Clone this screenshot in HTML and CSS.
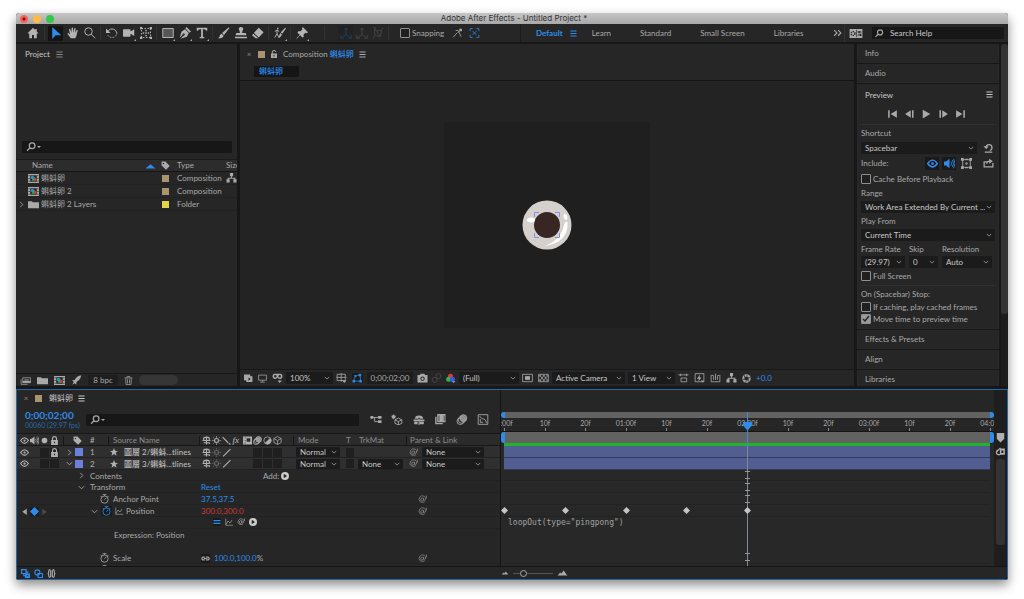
FILE: index.html
```html
<!DOCTYPE html>
<html lang="en">
<head>
<meta charset="utf-8">
<meta name="viewport" content="width=device-width, initial-scale=1">
<title>Adobe After Effects - Untitled Project *</title>
<link rel="stylesheet" href="styles.css">
</head>
<body>
<svg class="defs" aria-hidden="true">
<symbol id="home" viewBox="0 0 16 16"><path d="M8 1 0.5 8.5H3V15h3.7v-4.500h2.600V15H13V8.500h2.500L13 6V2.500h-2V4z"/></symbol>
<symbol id="arrow" viewBox="0 0 16 16"><path d="M3 0v16l4.500-5H15z"/></symbol>
<symbol id="hand" viewBox="0 0 16 16"><path d="M5 15 1 9.500Q0 8 1.500 7.800L4 10 2.700 3Q3.500 1.800 4.500 3l1.300 4.500L6.200 1.200Q7.300 0 8 1.200l.4 6L9.800 1.500q1.200-.8 1.700.4L10.800 8l2-4q1.200-.5 1.500.8L12.500 12 11 15z"/></symbol>
<symbol id="zoom" viewBox="0 0 16 16"><path class="s" d="M1 6a5 5 0 1 0 10 0A5 5 0 1 0 1 6M9.500 9.500 15 15"/></symbol>
<symbol id="find" viewBox="0 0 16 16"><path class="s2" d="M4.500 6a4.500 4.500 0 1 0 9 0a4.500 4.500 0 1 0-9 0M5.500 9 1 14"/></symbol>
<symbol id="rotate" viewBox="0 0 16 16"><path class="s" d="M3 5a6.500 6.500 0 0 1 11.500 3"/><path class="s" stroke-dasharray="2 1.500" d="M14.500 8A6.500 6.500 0 0 1 2 10"/><path d="M0 2v6h6z"/></symbol>
<symbol id="camera" viewBox="0 0 16 16"><path d="M0 4q0-1 1-1h8q1 0 1 1v2l5-3v9l-5-3v3q0 1-1 1H1q-1 0-1-1z"/></symbol>
<symbol id="pan" viewBox="0 0 16 16"><path class="s" stroke-dasharray="2 2" d="M2 2h12v12H2z"/><path d="M8 3l1.500 2.500h-3zM8 13l1.500-2.500h-3zM3 8l2.500-1.500v3zM13 8l-2.500-1.500v3zM7 7h2v2H7zM0 0h3v3H0zM13 0h3v3h-3zM0 13h3v3H0zM13 13h3v3h-3z"/></symbol>
<symbol id="rect" viewBox="0 0 16 16"><path class="s" d="M1 2h14v12H1z"/><path fill-opacity=".35" d="M1 2h14v12H1z"/></symbol>
<symbol id="pen" viewBox="0 0 16 16"><path d="M10 0l6 6-2 1.500L8.500 2zM8 3l5 5-2.500 5L2 15.500l4-4a1.500 1.500 0 1 0-1.200-1.200l-4 4L3.500 6z"/></symbol>
<symbol id="type" viewBox="0 0 16 16"><path d="M1 1h14v4h-1.500Q13 3 11 3H9.200v9.500q0 1 2 1.200V15H4.800v-1.300q2-.2 2-1.200V3H5Q3 3 2.500 5H1z"/></symbol>
<symbol id="brush" viewBox="0 0 16 16"><path d="M15.500 1 8 10.500 5.500 8 14 .5zM5 9l2.500 2.500Q6 15.500 0 15q3-2 2.500-4Q3.500 9 5 9z"/></symbol>
<symbol id="stamp" viewBox="0 0 16 16"><path d="M8 0q3 0 3 2.500Q9.500 5 9.500 8H14q1 0 1 3H1q0-3 1-3h4.500q0-3-1.500-5.500Q5 0 8 0zM0 13h16v2H0z"/></symbol>
<symbol id="eraser" viewBox="0 0 16 16"><path d="M9 1 15.500 7 9 14 2.500 8zM1.800 9l6.500 6H5L0 11z"/></symbol>
<symbol id="roto" viewBox="0 0 16 16"><path d="M16 2l-5 7-2-2 6-6zM8.500 8l2 2Q9 15 5 14q2-1 2-3zM4 1h2v2H4z"/><path class="s" d="M1 6l3-2 3 2M4 4v5l-3 5M4 9l2 4"/></symbol>
<symbol id="pin" viewBox="0 0 16 16"><path d="M9 0l7 7-2 1.200-1.500-.5L10 10.200l.3 3L8.500 14 5.500 11 1 15.500.500 15 5 10.500 2 7.500 3 5.500h3L8.500 3 8 1.500z"/></symbol>
<symbol id="axis" viewBox="0 0 16 16"><path class="s" d="M8 2v8L2 14M8 10l6 4M6 4l2-3 2 3M1 11v4h4M15 11v4h-4"/></symbol>
<symbol id="axis2" viewBox="0 0 16 16"><path class="s" d="M3 3l3 2h7l-2 8-7-2zM1 1h4v4M6 5l5 8M15 1l-4 4M1 15l3-4"/></symbol>
<symbol id="snap" viewBox="0 0 16 16"><path class="s" d="M1 15l6-7M5 4h4l5 10M8 8l5-5"/><path d="M11 1h4v4h-4z"/></symbol>
<symbol id="snap2" viewBox="0 0 16 16"><path class="s" d="M1 5V1h4M11 1h4v4M15 11v4h-4M5 15H1v-4M5 5l6 6M11 5l-6 6"/></symbol>
<symbol id="menu" viewBox="0 0 16 16"><path d="M1 1h14v2.500H1zM1 6.800h14v2.500H1zM1 12.500h14V15H1z"/></symbol>
<symbol id="more" viewBox="0 0 16 16"><path class="s2" d="M2 2l5 5-5 5M9 2l5 5-5 5"/></symbol>
<symbol id="kit" viewBox="0 0 20 14"><path fill-rule="evenodd" d="M0 0h20v14H0zM10 1v12h1V1zM12.500 4v1.500h6V4zM12.500 8.500V10h6V8.500z"/><circle cx="5.500" cy="7" r="3" fill="none" stroke="#262626" stroke-width="2" stroke-dasharray="2 1"/><path fill="#262626" d="M14 3h2v3.500h-2zM16 7.500h2V11h-2z"/></symbol>
<symbol id="tri" viewBox="0 0 16 16"><path d="M0 12 8 5l8 7z"/></symbol>
<symbol id="tag" viewBox="0 0 16 16"><path fill-rule="evenodd" d="M1 1h7l7.500 8-6.500 6.500L1 8zM3 4.500a1.300 1.300 0 1 0 2.600 0 1.300 1.300 0 1 0-2.600 0"/></symbol>
<symbol id="comp" viewBox="0 0 20 16"><path fill-rule="evenodd" d="M0 0h20v16H0zM1 2v2h2V2zM1 7v2h2V7zM1 12v2h2v-2zM17 2v2h2V2zM17 7v2h2V7zM17 12v2h2v-2z"/><path fill="#2b2b2b" d="M4 2h12v12H4z"/><circle cx="8" cy="6" r="3" fill="#2997d8"/><path fill="#35a853" d="M8 9l4-4 1 7H7z"/><path fill="#d6413a" d="M11 7h4v5h-4z"/></symbol>
<symbol id="folder" viewBox="0 0 20 16"><path d="M0 2h7l2 2h11v11H0z"/></symbol>
<symbol id="tree" viewBox="0 0 16 16"><path d="M5.500 0h5v5h-5zM0 10h5v5H0zM11 10h5v5h-5zM7.300 5h1.400v2.500h5.500V10h-1.500V9H3.300v1H1.800V7.500h5.500z"/></symbol>
<symbol id="down" viewBox="0 0 16 16"><path class="s2" d="M2 5l6 6 6-6"/></symbol>
<symbol id="right" viewBox="0 0 16 16"><path class="s2" d="M5 2l6 6-6 6"/></symbol>
<symbol id="stack" viewBox="0 0 20 16"><path class="s" d="M5 12V3h14v9zM2 6v9h12"/><path d="M8 6h8v2H8zM5 9h14v3H5z"/></symbol>
<symbol id="rocket" viewBox="0 0 16 16"><path d="M15.500.5Q15 7 8 11l-.5 4-3-2L1 15.500 3.500 11 1 8.500 5 8Q9 1 15.500.5z"/></symbol>
<symbol id="trash" viewBox="0 0 16 16"><path class="s" d="M1 3.500h14M5.500 3V1h5v2M3 4l.5 11h9L13 4M6.200 6v7M9.800 6v7"/></symbol>
<symbol id="unlock" viewBox="0 0 16 16"><path class="s2" d="M4.500 8V4a3.500 3 0 0 1 7 0"/><path fill-rule="evenodd" d="M2 7h12v9H2zM7 10v3h2v-3z"/></symbol>
<symbol id="lock" viewBox="0 0 16 16"><path class="s2" d="M4.500 8V4a3.500 3 0 0 1 7 0v4"/><path fill-rule="evenodd" d="M2 7h12v9H2zM7 10v3h2v-3z"/></symbol>
<symbol id="multi" viewBox="0 0 16 16"><path fill-rule="evenodd" d="M0 1h11v3h4v10H4v-3H0zM8 6v6l4-3z"/></symbol>
<symbol id="monitor" viewBox="0 0 16 16"><path class="s" d="M1 2h14v9H1zM8 11v3M4 14.500h8"/></symbol>
<symbol id="mask" viewBox="0 0 16 16"><path fill-rule="evenodd" d="M3 1h10q3 0 3 4t-3.500 4.500Q9.500 9.500 8 7 6.500 9.500 3.500 9.500 0 9 0 5t3-4zM2.500 5q0 2 2 2t2-2-2-2-2 2zM9.500 5q0 2 2 2t2-2-2-2-2 2zM8 12h7l-3.500 4z"/></symbol>
<symbol id="grid" viewBox="0 0 16 16"><path class="s" d="M1 2h13v10H1zM7.500 0v14M0 7h16"/><path d="M9 12h7l-3.500 4z"/></symbol>
<symbol id="path" viewBox="0 0 16 16"><path class="s" d="M2 13Q2 4 12 3l1 10z"/><path d="M0 11h4v4H0zM10 1h4v4h-4zM11 11h4v4h-4zM3 3h3v3H3z"/></symbol>
<symbol id="photo" viewBox="0 0 16 16"><path fill-rule="evenodd" d="M0 3h4l1-2h6l1 2h4v12H0zM4.500 9q0 3.500 3.500 3.500T11.500 9 8 5.500 4.500 9zM6 9q0-2 2-2t2 2-2 2-2-2z"/></symbol>
<symbol id="ghost" viewBox="0 0 16 16"><circle class="s" cx="11" cy="5" r="4"/><circle class="s" cx="5" cy="11" r="4"/></symbol>
<symbol id="rgb" viewBox="0 0 16 16"><circle cx="8" cy="5" r="4" fill="#ed342d"/><circle cx="5" cy="10" r="4" fill="#31b44a"/><circle cx="11" cy="10" r="4" fill="#315df0"/><path d="M10 13h6l-3 3z"/></symbol>
<symbol id="roi" viewBox="0 0 18 16"><path class="s" d="M1 2h16v12H1z"/><path d="M5 5h8v6H5z"/></symbol>
<symbol id="checker" viewBox="0 0 18 16"><path class="s" d="M1 2h16v12H1z"/><path fill-opacity=".8" d="M2 3h3v3H2zM8 3h3v3H8zM5 6h3v4H5zM11 6h3v4h-3zM2 10h3v3H2zM8 10h3v3H8zM14 10h2v3h-2zM14 3h2v3h-2z"/></symbol>
<symbol id="aspect" viewBox="0 0 16 16"><path class="s" d="M0 3h16M3 1v4M13 1v4M4 8h9v6H4z"/></symbol>
<symbol id="fast" viewBox="0 0 16 16"><path class="s" d="M1 1h14v13H1z"/><path d="M9 2 4 9h3l-1 5 5-7H8zM10 12h5l-2 3z"/></symbol>
<symbol id="flow" viewBox="0 0 16 16"><path class="s" d="M1 3v11h14V3M5 5v6M8 1v10M11 5v6M2 4h3M11 4h3"/></symbol>
<symbol id="shutter" viewBox="0 0 16 16"><circle cx="8" cy="8" r="7.500"/><path stroke="#262626" stroke-width="1.300" fill="#262626" d="M6.500 5.500h3L11 8l-1.500 2.500h-3L5 8zM6.500 5.500 10 1M9.500 5.500 15 7M11 8l1 6M9.500 10.500 6 15M6.500 10.500 1 9M5 8 4 2"/></symbol>
<symbol id="first" viewBox="0 0 16 16"><path d="M1 2h2.500v12H1zM15 2v12L5 8z"/></symbol>
<symbol id="prev" viewBox="0 0 16 16"><path d="M10 2v12L1 8zM12 2h2.500v12H12z"/></symbol>
<symbol id="play" viewBox="0 0 16 16"><path d="M2 1v14l12-7z"/></symbol>
<symbol id="reset" viewBox="0 0 16 16"><path class="s2" d="M4 7a4.800 4.800 0 1 1 6 5M2 14.500h12"/><path d="M0 5h8l-3.500 5z"/></symbol>
<symbol id="share" viewBox="0 0 16 16"><path class="s2" d="M5 6H1v8h14V8M5 9q0-4 5-4"/><path d="M9 1l6 4-6 4z"/></symbol>
<symbol id="eye" viewBox="0 0 16 16"><path class="s2" d="M1 8q3.500-5 7-5t7 5q-3.500 5-7 5T1 8z"/><circle cx="8" cy="8" r="2"/></symbol>
<symbol id="speaker" viewBox="0 0 16 16"><path d="M0 5h3l5-4v14l-5-4H0z"/><path class="s" d="M10 5q2 3 0 6M12 3q4 5 0 10M14 1q4 7 0 14"/></symbol>
<symbol id="dot" viewBox="0 0 16 16"><circle cx="8" cy="8" r="5"/></symbol>
<symbol id="box" viewBox="0 0 16 16"><path class="s" d="M2.500 2.500h11v11h-11zM7 7h2v2H7z"/><path d="M0 0h4v4H0zM12 0h4v4h-4zM0 12h4v4H0zM12 12h4v4h-4zM6 1h4v2H6zM6 13h4v2H6z"/></symbol>
<symbol id="shy" viewBox="0 0 16 16"><path class="s2" d="M3 8V5q0-3 5-3t5 3v3M1 8h14M8 3v12M3 12h10v2"/></symbol>
<symbol id="sun" viewBox="0 0 16 16"><circle class="s2" cx="8" cy="8" r="3.500"/><path class="s" d="M8 0v3M8 13v3M0 8h3M13 8h3M2.500 2.500 4 4M12 12l1.500 1.500M2.500 13.500 4 12M12 4l1.500-1.500"/></symbol>
<symbol id="back" viewBox="0 0 16 16"><path class="s2" d="M1 2l10 10M12 13l3 2"/></symbol>
<symbol id="slash" viewBox="0 0 16 16"><path class="s2" d="M2 15 15 2"/></symbol>
<symbol id="film" viewBox="0 0 16 16"><path fill-rule="evenodd" d="M0 1h16v14H0zM3 2.500v2h1.500v-2zM3 7v2h1.500V7zM3 11.500v2h1.500v-2zM6.500 4v6H13V4z"/></symbol>
<symbol id="blur" viewBox="0 0 16 16"><circle fill-opacity=".7" cx="10" cy="6" r="5"/><circle class="s" cx="10" cy="6" r="5"/><circle class="s" cx="7.500" cy="8.500" r="5"/><circle class="s" cx="5.500" cy="10.500" r="4.800"/></symbol>
<symbol id="half" viewBox="0 0 16 16"><circle class="s" cx="8" cy="8" r="6.500"/><path d="M12.600 3.400A6.500 6.500 0 0 1 3.400 12.600z"/></symbol>
<symbol id="cube" viewBox="0 0 16 16"><path class="s" d="M8 1l6.500 3.500v7L8 15l-6.500-3.500v-7zM1.500 4.500 8 8l6.500-3.500M8 8v7"/></symbol>
<symbol id="star" viewBox="0 0 16 16"><path d="M8 0l2.200 5.600 5.800.3-4.600 3.700L13 15.500 8 12l-5 3.500 1.600-5.900L0 5.900l5.800-.3z"/></symbol>
<symbol id="whip" viewBox="0 0 16 16"><path class="s" d="M10 6q-4-2-5 1-1 4 2 4 3 0 3-5v3q1 3 3 0 2-5-2-7-5-2-8 2-3 5 1 8 4 3 8 0M15 1v5"/></symbol>
<symbol id="watch" viewBox="0 0 16 16"><circle class="s" cx="8" cy="9" r="5.800"/><path class="s" d="M8 9l3-3M5 1h6M8 1v2M12.500 3l2 2M2 3l1.500 2"/></symbol>
<symbol id="graph" viewBox="0 0 16 16"><path class="s" d="M1.500 1v13.500H16M2 13l4-7 4 4 4-6"/></symbol>
<symbol id="equal" viewBox="0 0 16 16"><path d="M1 4h14v2.500H1zM1 9.500h14V12H1z"/></symbol>
<symbol id="goto" viewBox="0 0 16 16"><path fill-rule="evenodd" d="M0 8a8 8 0 1 0 16 0A8 8 0 1 0 0 8M5.500 3.500v9L12 8z"/></symbol>
<symbol id="link" viewBox="0 0 16 16"><path class="s2" d="M7 10.500H4a2.500 2.500 0 0 1 0-5h3M9 5.500h3a2.500 2.500 0 0 1 0 5H9M5 8h6"/></symbol>
<symbol id="diamond" viewBox="0 0 16 16"><path d="M8 0l8 8-8 8-8-8z"/></symbol>
<symbol id="left" viewBox="0 0 16 16"><path d="M12 3v11L4 8.500z"/></symbol>
<symbol id="mini" viewBox="0 0 16 16"><path class="s" d="M0 5h12M6 5v6h7"/><path d="M0 3h4v4H0zM11 3h5v4h-5zM11 9h5v4h-5z"/></symbol>
<symbol id="draft" viewBox="0 0 16 16"><path class="s" d="M10 6l5 2.500v5L10 16l-5-2.500v-5zM5 8.500 10 11l5-2.500M10 11v5"/><path d="M3 0v6M0 1l2 1 1-2 1 2 2-1-1 2 2 1-2 1 1 2-2-1-1 2-1-2-2 1 1-2-2-1 2-1z"/></symbol>
<symbol id="shyfill" viewBox="0 0 16 16"><path d="M2 7q0-5 6-5t6 5h-4.500L8 5 6.500 7zM0 8h16v2H0zM1 11h5v4H1zM9 11h6v4H9zM7.300 7h1.400v9H7.300z"/></symbol>
<symbol id="frames" viewBox="0 0 16 16"><path fill-rule="evenodd" d="M4 0h12v12H4zM6 2v8h1V2zM13.500 2v8h1V2zM1 4h2v9h9v2H1z"/></symbol>
<symbol id="curve" viewBox="0 0 16 16"><path class="s" d="M1 1h14v14H1zM3 3l4 4q5 0 6 6M4 7v5h4"/></symbol>
<symbol id="swap" viewBox="0 0 16 16"><path class="s2" d="M1 1h8v7H1zM5 8v4h3M9 5h3v3"/><path fill-rule="evenodd" d="M7 8h9v8H7zM10 11v2h3v-2z"/></symbol>
<symbol id="swap2" viewBox="0 0 16 16"><circle class="s2" cx="6" cy="6" r="4.500"/><path class="s2" d="M7 8h8v7H7z"/></symbol>
<symbol id="brace" viewBox="0 0 16 16"><path class="s2" d="M6 1Q3 1 3 4v2q0 2-2 2 2 0 2 2v2q0 3 3 3M10 1q3 0 3 3v2q0 2 2 2-2 0-2 2v2q0 3-3 3M6.500 2v12M9.500 2v12"/></symbol>
<symbol id="marker" viewBox="0 0 16 16"><path d="M2 0h12v9l-6 6-6-6z"/></symbol>
<symbol id="cut" viewBox="0 0 16 16"><path class="s2" d="M8 3 1 10M5 6a4 4 0 1 0 3 7"/><path fill-rule="evenodd" d="M7 4h8v10H7zM9.500 7v4h3V7z"/></symbol>
<symbol id="hill" viewBox="0 0 16 10"><path d="M0 9 4 4l2 2 4-5 6 8z"/></symbol>
<symbol id="head" viewBox="0 0 16 16"><path d="M0 1h16v6l-8 9-8-9z"/></symbol>
</svg>

<div class="window">
<header class="titlebar">
  <div class="lights"><button class="light red" aria-label="Close"></button><button class="light amber" aria-label="Minimize"></button><button class="light green" aria-label="Zoom"></button></div>
  <h1>Adobe After Effects - Untitled Project *</h1>
</header>

<div class="toolbar">
  <div class="tools">
    <div class="group first"><button class="tool" aria-label="Home"><svg><use href="#home"/></svg></button></div>
    <div class="group"><button class="tool on" aria-label="Selection"><svg><use href="#arrow"/></svg></button><button class="tool" aria-label="Hand"><svg><use href="#hand"/></svg></button><button class="tool" aria-label="Zoom"><svg><use href="#zoom"/></svg></button></div>
    <div class="group"><button class="tool" aria-label="Rotate"><svg><use href="#rotate"/></svg></button><button class="tool more" aria-label="Camera"><svg><use href="#camera"/></svg></button><button class="tool" aria-label="Pan behind"><svg><use href="#pan"/></svg></button></div>
    <div class="group"><button class="tool more" aria-label="Rectangle"><svg><use href="#rect"/></svg></button><button class="tool more" aria-label="Pen"><svg><use href="#pen"/></svg></button><button class="tool more" aria-label="Type"><svg><use href="#type"/></svg></button></div>
    <div class="group"><button class="tool" aria-label="Brush"><svg><use href="#brush"/></svg></button><button class="tool" aria-label="Clone stamp"><svg><use href="#stamp"/></svg></button><button class="tool" aria-label="Eraser"><svg><use href="#eraser"/></svg></button></div>
    <div class="group"><button class="tool more" aria-label="Roto brush"><svg><use href="#roto"/></svg></button></div>
    <div class="group"><button class="tool more" aria-label="Puppet pin"><svg><use href="#pin"/></svg></button></div>
    <div class="group axes"><button class="tool blue" aria-label="Local axis"><svg><use href="#axis"/></svg></button><button class="tool" aria-label="World axis"><svg><use href="#axis"/></svg></button><button class="tool" aria-label="View axis"><svg><use href="#axis2"/></svg></button></div>
    <div class="group snapping"><label><input type="checkbox">Snapping</label><svg class="i10"><use href="#snap"/></svg><svg class="i10 blue"><use href="#snap2"/></svg></div>
  </div>
  <nav class="spaces"><a href="#" class="current">Default</a><svg class="i7 blue"><use href="#menu"/></svg><a href="#" class="learn">Learn</a><a href="#">Standard</a><a href="#">Small Screen</a><a href="#">Libraries</a><svg class="i9 end"><use href="#more"/></svg></nav>
  <div class="help"><svg class="kit"><use href="#kit"/></svg><label class="field"><svg class="i9"><use href="#find"/></svg><input type="text" placeholder="Search Help" aria-label="Search Help"></label></div>
</div>

<main class="main">
  <section class="panel project">
    <h2 class="head">Project <svg class="i7"><use href="#menu"/></svg></h2>
    <label class="field psearch"><svg class="i10"><use href="#find"/></svg><span class="caret"></span><input type="text" aria-label="Search project"></label>
    <table class="assets">
      <thead><tr><th class="c-name">Name</th><th class="c-sort"><svg class="i10 blue"><use href="#tri"/></svg></th><th class="c-tag"><svg class="i9"><use href="#tag"/></svg></th><th class="c-type">Type</th><th class="c-size">Size</th></tr></thead>
      <tbody>
        <tr><td colspan="2"><div class="name"><svg class="thumb"><use href="#comp"/></svg>蝌蚪卵</div></td><td class="c-tag"><i class="sw tan"></i></td><td>Composition</td><td><svg class="i10"><use href="#tree"/></svg></td></tr>
        <tr><td colspan="2"><div class="name"><svg class="thumb"><use href="#comp"/></svg>蝌蚪卵 2</div></td><td class="c-tag"><i class="sw tan"></i></td><td>Composition</td><td></td></tr>
        <tr><td colspan="2"><div class="name folder"><svg class="i7"><use href="#right"/></svg><svg class="thumb"><use href="#folder"/></svg>蝌蚪卵 2 Layers</div></td><td class="c-tag"><i class="sw yellow"></i></td><td>Folder</td><td></td></tr>
      </tbody>
    </table>
    <footer class="pfoot"><svg class="thumb"><use href="#stack"/></svg><svg class="thumb"><use href="#folder"/></svg><svg class="thumb"><use href="#comp"/></svg><svg class="i10"><use href="#rocket"/></svg><button class="bpc">8 bpc</button><svg class="i9"><use href="#trash"/></svg><span class="hscroll"></span></footer>
  </section>

  <section class="panel viewer">
    <div class="head"><span class="x">×</span><i class="sw tan"></i><svg class="i8"><use href="#unlock"/></svg><h2>Composition <b>蝌蚪卵</b></h2><svg class="i7"><use href="#menu"/></svg></div>
    <div class="crumbs"><a href="#">蝌蚪卵</a></div>
    <div class="stage"><div class="canvas">
      <svg class="egg" viewBox="0 0 50 50"><circle cx="25" cy="25" r="24.500" fill="#d5d0cc"/><circle cx="25" cy="25" r="13" fill="#372624"/><ellipse cx="9" cy="20" rx="4" ry="2.500" fill="#fff"/><ellipse cx="43.500" cy="17" rx="1.800" ry="3" fill="#fff" transform="rotate(-12 43.500 17)"/><path d="M45.500 22Q47 42 23 46 39 40 42 25 43 21 45.500 22z" fill="#fff"/><path d="M12.500 17v-4.500H17M33 12.500h4.500V17M37.500 33v4.500H33M17 37.500h-4.500V33" fill="none" stroke="#7e93e8"/></svg>
    </div></div>
    <footer class="vfoot">
      <svg class="i9"><use href="#multi"/></svg><svg class="i9"><use href="#monitor"/></svg><svg class="i10"><use href="#mask"/></svg>
      <select aria-label="Magnification" class="w44"><option>100%</option></select>
      <svg class="i10"><use href="#grid"/></svg><svg class="i10 blue lit"><use href="#path"/></svg>
      <button class="code">0;00;02;00</button>
      <svg class="i10"><use href="#photo"/></svg><svg class="i10 faint near"><use href="#ghost"/></svg><svg class="i10 near"><use href="#rgb"/></svg>
      <select aria-label="Resolution" class="w58"><option>(Full)</option></select>
      <svg class="i10"><use href="#roi"/></svg><svg class="i10"><use href="#checker"/></svg>
      <select aria-label="Camera" class="w74"><option>Active Camera</option></select><select aria-label="View layout" class="w48"><option>1 View</option></select>
      <svg class="i10"><use href="#aspect"/></svg><svg class="i10"><use href="#fast"/></svg><svg class="i10"><use href="#flow"/></svg><svg class="i10"><use href="#tree"/></svg>
      <svg class="i9"><use href="#shutter"/></svg><a href="#" class="exposure">+0.0</a>
    </footer>
  </section>

  <aside class="side">
    <div class="stacked">
      <h3>Info</h3><h3>Audio</h3>
      <section class="preview">
        <h3>Preview <svg class="i7"><use href="#menu"/></svg></h3>
        <div class="transport"><button aria-label="First frame"><svg><use href="#first"/></svg></button><button aria-label="Previous frame"><svg><use href="#prev"/></svg></button><button aria-label="Play"><svg><use href="#play"/></svg></button><button class="flip" aria-label="Next frame"><svg><use href="#prev"/></svg></button><button class="flip" aria-label="Last frame"><svg><use href="#first"/></svg></button></div>
        <label for="shortcut" class="lab">Shortcut</label>
        <div class="line"><select id="shortcut" class="grow"><option>Spacebar</option></select><svg class="i10 tailico"><use href="#reset"/></svg></div>
        <div class="line include"><span>Include:</span><button class="inc on" aria-label="Video"><svg><use href="#eye"/></svg></button><button class="inc on" aria-label="Audio"><svg><use href="#speaker"/></svg></button><button class="inc" aria-label="Overlays"><svg><use href="#box"/></svg></button><svg class="i10 tailico"><use href="#share"/></svg></div>
        <label class="check cache"><input type="checkbox">Cache Before Playback</label>
        <label for="range" class="lab">Range</label>
        <select id="range" class="full"><option>Work Area Extended By Current ...</option></select>
        <label for="from" class="lab">Play From</label>
        <select id="from" class="full"><option>Current Time</option></select>
        <div class="trio"><label>Frame Rate<select><option>(29.97)</option></select></label><label>Skip<select><option>0</option></select></label><label>Resolution<select><option>Auto</option></select></label></div>
        <label class="check"><input type="checkbox">Full Screen</label>
        <div class="stop"><span>On (Spacebar) Stop:</span><label class="check"><input type="checkbox">If caching, play cached frames</label><label class="check"><input type="checkbox" checked>Move time to preview time</label></div>
      </section>
      <h3>Effects &amp; Presets</h3><h3>Align</h3><h3 class="cutoff">Libraries</h3>
    </div>
    <div class="vscroll"><span></span></div>
  </aside>
</main>

<section class="timeline">
  <div class="layers">
    <div class="thead"><span class="x">×</span><i class="sw tan"></i><h2>蝌蚪卵</h2><svg class="i7"><use href="#menu"/></svg></div>
    <div class="tbar"><div class="time"><strong>0;00;02;00</strong><span>00060 (29.97 fps)</span></div>
      <label class="field"><svg class="i10"><use href="#find"/></svg><span class="caret"></span><input type="text" aria-label="Search layers"></label>
      <div class="tbtns"><svg><use href="#mini"/></svg><svg><use href="#draft"/></svg><svg><use href="#shyfill"/></svg><svg><use href="#frames"/></svg><svg><use href="#blur"/></svg><svg><use href="#curve"/></svg></div></div>
    <div class="row cols">
      <div class="av"><svg><use href="#eye"/></svg><svg><use href="#speaker"/></svg><svg><use href="#dot"/></svg><svg><use href="#lock"/></svg></div>
      <div class="lbl bar"><svg class="i9 htag"><use href="#tag"/></svg></div><div class="num">#</div><div class="bar pad">Source Name</div>
      <div class="switches bar"><svg><use href="#shy"/></svg><svg><use href="#sun"/></svg><svg><use href="#back"/></svg><em>fx</em><svg><use href="#film"/></svg><svg><use href="#blur"/></svg><svg><use href="#half"/></svg><svg><use href="#cube"/></svg></div>
      <div class="bar pad">Mode</div><div class="tcell">T</div><div class="pad">TrkMat</div><div class="bar pad last">Parent &amp; Link</div>
    </div>
    <div class="rows">
      <div class="row layer">
        <div class="av"><svg><use href="#eye"/></svg><i></i><i class="hole"></i><svg class="hole"><use href="#lock"/></svg></div>
        <div class="lbl"><svg class="i7"><use href="#right"/></svg><i class="sw blu"></i></div><div class="num">1</div><div class="src"><svg class="i8"><use href="#star"/></svg>圖層 2/蝌蚪...tlines</div>
        <div class="switches"><svg><use href="#shy"/></svg><svg class="dim"><use href="#sun"/></svg><svg><use href="#slash"/></svg><span></span><span></span><i class="hole"></i><i class="hole"></i><i class="hole"></i></div>
        <div class="cell"><select aria-label="Mode"><option>Normal</option></select></div><div class="tcell"><i class="hole"></i></div><div></div>
        <div class="parent"><svg class="i9"><use href="#whip"/></svg><select aria-label="Parent"><option>None</option></select></div>
      </div>
      <div class="row layer">
        <div class="av"><svg><use href="#eye"/></svg><i></i><i class="hole"></i><i class="hole"></i></div>
        <div class="lbl"><svg class="i7"><use href="#down"/></svg><i class="sw blu"></i></div><div class="num">2</div><div class="src"><svg class="i8"><use href="#star"/></svg>圖層 3/蝌蚪...tlines</div>
        <div class="switches"><svg><use href="#shy"/></svg><svg class="dim"><use href="#sun"/></svg><svg><use href="#slash"/></svg><span></span><span></span><i class="hole"></i><i class="hole"></i><i class="hole"></i></div>
        <div class="cell"><select aria-label="Mode"><option>Normal</option></select></div><div class="tcell"><i class="hole"></i></div><div class="cell"><select aria-label="Track matte"><option>None</option></select></div>
        <div class="parent"><svg class="i9"><use href="#whip"/></svg><select aria-label="Parent"><option>None</option></select></div>
      </div>
      <div class="prop"><div class="av"></div><div class="label d1"><svg class="i7"><use href="#right"/></svg>Contents</div><div class="value add">Add:<svg class="i8"><use href="#goto"/></svg></div></div>
      <div class="prop"><div class="av"></div><div class="label d1"><svg class="i7"><use href="#down"/></svg>Transform</div><div class="value"><a href="#">Reset</a></div></div>
      <div class="prop"><div class="av"></div><div class="label d3"><svg class="i10"><use href="#watch"/></svg>Anchor Point</div><div class="value"><a href="#">37.5,37.5</a></div><svg class="i9 pick"><use href="#whip"/></svg></div>
      <div class="prop"><div class="av keys"><svg><use href="#left"/></svg><svg class="blue lit"><use href="#diamond"/></svg><svg class="flip faint"><use href="#left"/></svg></div><div class="label d2"><svg class="i7"><use href="#down"/></svg><svg class="i10 blue lit"><use href="#watch"/></svg><svg class="i8"><use href="#graph"/></svg>Position</div><div class="value"><a href="#" class="red-t">300.0,300.0</a></div><svg class="i9 pick"><use href="#whip"/></svg></div>
      <div class="prop"><div class="av"></div><div class="label"></div><div class="value exprs"><svg class="i8 blue lit"><use href="#equal"/></svg><svg class="i8"><use href="#graph"/></svg><svg class="i8"><use href="#whip"/></svg><svg class="i8"><use href="#goto"/></svg></div></div>
      <div class="prop none"><div class="av"></div><div class="label d4">Expression: Position</div></div>
      <div class="prop none"></div>
      <div class="prop"><div class="av"></div><div class="label d3"><svg class="i10"><use href="#watch"/></svg>Scale</div><div class="value"><svg class="i9 chain"><use href="#link"/></svg><a href="#">100.0,100.0</a>%</div><svg class="i9 pick"><use href="#whip"/></svg></div>
      <div class="prop"><div class="av"></div><div class="label d3"><svg class="i10"><use href="#watch"/></svg>Rotation</div><div class="value"><a href="#">0</a>x<a href="#">+0.0</a>°</div><svg class="i9 pick"><use href="#whip"/></svg></div>
    </div>
  </div>
  <div class="graph">
    <div class="tracks">
      <div class="navi"></div>
      <div class="ruler"><span>0:00f</span><span>10f</span><span>20f</span><span>01:00f</span><span>10f</span><span>20f</span><span>02:00f</span><span>10f</span><span>20f</span><span>03:00f</span><span>10f</span><span>20f</span><span>04:00f</span></div>
      <div class="work"></div>
      <div class="rows lanes"><div class="clip"></div><div class="clip"></div><div></div><div></div><div></div><div></div><code>loopOut(type="pingpong")</code><div class="open"></div><div class="open"></div><div></div><div></div></div>
      <div class="marks">
        <svg class="key k0"><use href="#diamond"/></svg><svg class="key k1"><use href="#diamond"/></svg><svg class="key k2"><use href="#diamond"/></svg><svg class="key k3"><use href="#diamond"/></svg>
        <div class="playhead"><svg class="cti"><use href="#head"/></svg><svg class="key"><use href="#diamond"/></svg><i class="beam b1"></i><i class="beam b2"></i><i class="beam b3"></i><i class="beam b4"></i></div>
      </div>
    </div>
    <div class="rail"><svg class="i10"><use href="#marker"/></svg><svg class="i10"><use href="#cut"/></svg><span></span></div>
  </div>
  <footer class="tfoot"><div class="toggles"><svg class="blue"><use href="#swap"/></svg><svg class="blue"><use href="#swap2"/></svg><svg><use href="#brace"/></svg></div><div class="zoomer"><svg class="small"><use href="#hill"/></svg><input type="range" min="0" max="100" value="20" aria-label="Timeline zoom"><svg><use href="#hill"/></svg></div></footer>
</section>
</div>
</body>
</html>
```

FILE: styles.css
```css
* { box-sizing: border-box; }
:root { --panel: #262626; --gap: #171717; --well: #171717; --text: #a9a9a9; --bright: #c8c8c8; --blue: #2d8ceb; }
body { margin: 0; padding: 13px 16px 19px; height: 100vh; background: #fff; overflow: hidden; font: 8px/12px Lato, "Noto Sans CJK TC", "Noto Sans CJK JP", sans-serif; color: var(--text); }
h1, h2, h3 { margin: 0; font: inherit; }
a { color: inherit; text-decoration: none; }
button { padding: 0; border: 0; background: none; color: inherit; font: inherit; }
svg { display: block; flex: none; fill: currentColor; }
.defs { position: absolute; width: 0; height: 0; }
.s { fill: none; stroke: currentColor; stroke-width: 1.300; }
.s2 { fill: none; stroke: currentColor; stroke-width: 2; }
.i7 { width: 7px; height: 7px; }
.i8 { width: 8px; height: 8px; }
.i9 { width: 9px; height: 9px; }
.i10 { width: 11px; height: 10px; }
.thumb { width: 11px; height: 9px; }
.blue, .value a, .exposure { color: var(--blue); }
.lit { background: #1b1b1b; }
.faint { color: #4a4a4a; }
.flip { transform: scaleX(-1); }
.sw { flex: none; display: inline-block; width: 7px; height: 7px; }
.tan { background: #a8946f; }
.yellow { background: #e3d44a; }
.blu { background: #6b80dd; width: 8px; height: 8px; }
.x { width: 8px; text-align: center; color: #888; }

input[type="text"] { flex: 1; min-width: 0; padding: 0; border: 0; background: none; color: var(--bright); font: inherit; outline: 0; }
input::placeholder { color: var(--bright); opacity: 1; }
input[type="checkbox"] { appearance: none; flex: none; width: 10px; height: 10px; margin: 0; border: 1px solid #8f8f8f; border-radius: 1px; background: #202020; }
input[type="checkbox"]:checked { background: #9a9a9a url("data:image/svg+xml,%3Csvg xmlns='http://www.w3.org/2000/svg' viewBox='0 0 8 8'%3E%3Cpath d='M1 4l2 2 4-5' fill='none' stroke='%23222' stroke-width='1.400'/%3E%3C/svg%3E") center / 8px no-repeat; }
select { appearance: none; min-width: 0; height: 12px; padding: 0 10px 0 4px; border: 0; border-radius: 1px; color: var(--bright); font: inherit; line-height: 12px; background: #1b1b1b url("data:image/svg+xml,%3Csvg xmlns='http://www.w3.org/2000/svg' viewBox='0 0 8 8'%3E%3Cpath d='M1 2.500l3 3 3-3' fill='none' stroke='%23aaa'/%3E%3C/svg%3E") right 3px center / 6px no-repeat; }
.field { display: flex; align-items: center; height: 12px; background: var(--well); border-radius: 1px; padding: 0 4px; }
.caret { width: 0; border: 2px solid transparent; border-top-color: var(--text); border-bottom: 0; }

.window { display: flex; flex-direction: column; height: 100%; border-radius: 3px; background: var(--gap); overflow: hidden; }
body::before { content: ""; position: absolute; inset: 13px 16px 19px; z-index: -1; border-radius: 3px; box-shadow: 0 5px 11px rgba(0, 0, 0, .45); }
.titlebar { display: grid; grid-template-columns: 1fr auto 1fr; align-items: center; height: 11px; padding-left: 4px; background: linear-gradient(#c6c6c6, #a8a8a8); color: #333; flex: none; }
.titlebar h1 { font: 8px/11px Inter, "Liberation Sans", sans-serif; }
.lights { display: flex; gap: 5px; }
.light { width: 8px; height: 8px; border-radius: 50%; }
.red { background: radial-gradient(circle, #721611 1px, #fb5e57 2px); }
.amber { background: #fdbc40; }
.green { background: #34c84a; }

.toolbar { display: flex; height: 18px; margin-bottom: 2px; background: var(--panel); flex: none; }
.tools { display: flex; align-items: center; width: 505px; border-right: 1px solid #1b1b1b; }
.group { display: flex; align-items: center; gap: 2px; height: 14px; padding: 0 3px; border-left: 1px solid #303030; }
.group.first { border-left: 0; padding: 0 4px 0 9px; }
.tool { position: relative; display: grid; place-items: center; width: 15px; height: 15px; color: #b4b4b4; }
.tool svg { width: 12px; height: 12px; }
.tool.on { background: #141414; color: var(--blue); }
.tool.more::after { content: ""; position: absolute; right: 0; bottom: 0; border: 1px solid #aaa; border-top-color: transparent; border-left-color: transparent; }
.axes { margin-left: 12px; color: #444; gap: 1px; padding-left: 13px; }
.axes .tool { color: #444; }
.axes .tool.blue { color: #1d4263; background: #222; }
.snapping { gap: 6px; padding-left: 11px; }
.snapping label { display: flex; align-items: center; gap: 2px; margin-right: 2px; }
.spaces { flex: 1; display: flex; align-items: center; gap: 29px; padding: 0 4px 0 15px; white-space: nowrap; overflow: hidden; }
.spaces svg { margin-left: -22px; }
.spaces .learn { margin-left: -14px; }
.spaces .end { margin-left: auto; }
.current { color: var(--blue); font-weight: 700; }
.help { display: flex; align-items: center; width: 164px; gap: 9px; padding: 0 4px 0 4px; border-left: 1px solid #333; }
.kit { width: 14px; height: 9px; }
.help .field { flex: 1; gap: 6px; padding-left: 3px; }

.main { display: grid; grid-template-columns: 221px 1fr 151px; gap: 3px; flex: 1; min-height: 0; margin-bottom: 3px; }
.panel { display: flex; flex-direction: column; min-width: 0; min-height: 0; background: var(--panel); overflow: hidden; }
.head { display: flex; align-items: center; height: 20px; flex: none; }
.project .head { gap: 6px; padding-left: 9px; color: var(--bright); }
.project .head svg { color: #888; }
.psearch { margin: 77px 5px 6px 6px; }
.assets { width: 100%; border-collapse: collapse; table-layout: fixed; }
.assets th { height: 12px; padding: 0; font-weight: 400; text-align: left; color: var(--text); background: #2c2c2c; border-top: 1px solid #1a1a1a; border-bottom: 1px solid #161616; line-height: 11px; }
.assets td { height: 13px; padding: 0; border-bottom: 1px solid #212121; line-height: 12px; white-space: nowrap; }
.assets .c-name { width: 129px; padding-left: 16px; }
.c-sort { width: 16px; }
.c-tag { width: 16px; }
.c-tag .sw { display: block; margin-left: 1px; }
.c-type { width: 49px; }
.name { display: flex; align-items: center; gap: 2px; padding-left: 12px; }
.name.folder { padding-left: 2px; }
.name.folder .i7 { margin-right: 1px; }
.pfoot { display: flex; align-items: center; gap: 6px; height: 13px; margin-top: auto; padding-left: 4px; border-top: 1px solid #181818; }
.bpc { width: 30px; height: 10px; background: #1e1e1e; line-height: 10px; }
.hscroll { width: 39px; height: 10px; border-radius: 5px; background: #363636; }

.viewer .head { padding-left: 5px; gap: 5px; }
.viewer .head h2 { white-space: nowrap; }
.viewer .head b, .crumbs a { color: var(--blue); font-weight: 500; }
.crumbs { height: 17px; padding: 2px 14px; border-bottom: 1px solid #141414; flex: none; }
.crumbs a { display: block; width: 45px; height: 11px; padding-left: 5px; background: #151515; line-height: 11px; }
.stage { flex: 1; min-height: 0; display: grid; place-items: center; background: #232323; border-bottom: 1px solid #181818; }
.canvas { display: grid; place-items: center; height: 206px; aspect-ratio: 1; background: #1f1f1f; }
.egg { width: 50px; height: 50px; }
.vfoot { display: flex; align-items: center; gap: 5px; height: 16px; padding-left: 4px; flex: none; white-space: nowrap; }
.vfoot select { margin: 0 -2px; }
.vfoot select + select { margin-left: 0; }
.vfoot .near { margin-left: -2px; }
.w44 { width: 47px; }
.w58 { width: 60px; }
.w74 { width: 73px; }
.w48 { width: 47px; }
.code { width: 46px; height: 12px; background: #1d1d1d; margin: 0 -1px; }

.side { display: grid; grid-template-columns: 1fr 7px; gap: 2px; min-height: 0; overflow: hidden; }
.stacked { min-width: 0; display: flex; flex-direction: column; gap: 1px; overflow: hidden; }
.stacked > h3, .preview { background: var(--panel); border: 1px solid #292929; border-top: 0; flex: none; }
.stacked > h3 { height: 19px; padding-left: 7px; line-height: 19px; white-space: nowrap; }
.stacked > h3.cutoff { flex: 1; }
.preview { padding: 0 3px; height: 245px; }
.preview h3 { display: flex; justify-content: space-between; align-items: center; height: 21px; padding: 0 2px 0 4px; color: var(--bright); }
.preview > * { white-space: nowrap; }
.transport { display: flex; justify-content: center; align-items: flex-start; gap: 6px; height: 20px; border-bottom: 1px solid #303030; padding: 4px 4px 0 0; }
.transport svg { width: 11px; height: 10px; }
.lab { display: block; height: 16px; line-height: 16px; }
.line { display: flex; align-items: center; justify-content: space-between; height: 13px; }
.grow { flex: 1; }
.tailico { margin: 0 1px 0 6px; }
.include { height: 18px; gap: 3px; }
.include span { flex: 1; }
.inc { display: grid; place-items: center; width: 14px; height: 13px; }
.inc svg { width: 11px; height: 11px; }
.inc.on { color: var(--blue); background: #191919; }
.include .tailico { margin-left: 7px; }
.check { display: flex; align-items: center; gap: 2px; height: 12px; }
.check.cache { height: 13px; }
.full { display: block; width: 100%; }
.trio { display: grid; grid-template-columns: 44px 29px 50px; gap: 4px; height: 29px; padding-top: 2px; }
.trio label { display: flex; flex-direction: column; gap: 1px; }
.stop { margin-top: 3px; padding-top: 2px; border-top: 1px solid #303030; }
.stop span { display: block; height: 13px; }
.vscroll { background: #1c1c1c; }
.vscroll span { display: block; height: 79%; border-radius: 3px; background: #333; }

.timeline { display: grid; grid-template-columns: 484px 1fr; grid-template-rows: 1fr 13px; flex: none; height: 191px; border: 1px solid #2a66a4; background: var(--panel); }
.layers, .graph { min-width: 0; min-height: 0; overflow: hidden; }
.layers { border-right: 1px solid #141414; }
.thead { display: flex; align-items: center; gap: 5px; height: 16px; padding-left: 5px; color: var(--bright); }
.thead h2 { margin-left: 2px; }
.tbar { display: flex; align-items: center; height: 27px; }
.time { display: flex; flex-direction: column; width: 69px; padding-left: 8px; color: var(--blue); white-space: nowrap; }
.time strong { font-size: 10px; line-height: 12px; font-weight: 700; }
.time span { font-size: 7px; line-height: 9px; color: #276aa8; }
.tbar .field { width: 273px; margin-top: 1px; }
.tbtns { flex: 1; display: flex; justify-content: space-between; padding: 0 11px; }
.tbtns svg { width: 12px; height: 11px; }
.row { display: grid; grid-template-columns: 46px 24px 21px 91px 94px 50px 12px 51px 1fr; align-items: center; white-space: nowrap; }
.cols { height: 13px; background: #2b2b2b; border-top: 1px solid #171717; border-bottom: 1px solid #171717; color: #8d8d8d; }
.bar { border-left: 1px solid #171717; height: 9px; display: flex; align-items: center; }
.pad { padding-left: 4px; }
.last { padding-left: 3px; }
.av { display: flex; width: 46px; padding-left: 3px; }
.av > * { width: 9px; height: 9px; margin-right: 1px; flex: none; }
.cols svg, .layer svg { color: #b0b0b0; }
.lbl { display: flex; align-items: center; gap: 2px; padding-left: 3px; }
.lbl.bar { padding-left: 9px; }
.num { padding-left: 3px; color: #b0b0b0; }
.src { display: flex; align-items: center; gap: 6px; padding-left: 2px; color: #bbb; font-weight: 500; overflow: hidden; }
.switches, .switches.bar { display: grid; grid-template-columns: repeat(8, 1fr); width: 84px; padding-left: 2px; align-items: center; }
.switches svg { width: 9px; height: 9px; }
.switches em { height: 9px; font: italic 9px/8px "Liberation Serif", serif; color: #c0c0c0; }
.switches .hole { height: 9px; margin-right: 1px; }
.layer .switches { padding-left: 3px; }
.layer svg.dim { color: #666; }
.hole { background: #1f1f1f; display: block; }
.tcell { padding-left: 3px; }
.tcell .hole { width: 8px; height: 9px; }
.cell { padding: 0 3px; }
.cell select, .parent select { width: 100%; height: 10px; line-height: 10px; display: block; }
.parent { display: flex; align-items: center; gap: 4px; padding: 0 16px 0 3px; }
.layer .parent svg, .pick { color: #8c8c8c; }
.rows { display: grid; grid-template-rows: repeat(11, 1fr); height: 130px; }
.rows > * { min-height: 0; border-bottom: 1px solid #222; }
.layer { background: #2f2f2f; }
.prop { display: grid; grid-template-columns: 46px 137px 206px 1fr; align-items: center; white-space: nowrap; }
.rows > .none { border-color: transparent; }
.label, .value { display: flex; align-items: center; }
.d1 { padding-left: 15px; gap: 5px; }
.d2 { padding-left: 28px; gap: 3px; }
.d3 { padding-left: 36px; gap: 3px; }
.d4 { padding-left: 51px; }
.value { padding-left: 1px; }
.value.add { padding-left: 63px; gap: 2px; }
.add svg, .exprs svg:last-child { color: #ccc; }
.value.exprs { padding-left: 13px; gap: 4px; }
.chain { margin-right: 4px; background: #1b1b1b; }
.value a.red-t { color: #ca3b36; }
.pick { margin-left: 12px; }

.graph { display: grid; grid-template-columns: 1fr 13px; }
.tracks { position: relative; padding-top: 22px; background: #282828; overflow: hidden; min-width: 0; }
.tracks::before { content: ""; position: absolute; inset: 0 0 auto 0; height: 22px; background: var(--panel); }
.navi, .work { border: solid var(--blue); border-width: 0 4px; background: #626262; }
.navi { height: 6px; border-radius: 3px; }
.ruler { display: flex; justify-content: space-between; height: 14px; padding: 0 3px; background: var(--panel); border-bottom: 1px solid #161616; }
.ruler span { display: flex; justify-content: center; width: 1px; height: 13px; white-space: nowrap; line-height: 11px; font-size: 7px; background: linear-gradient(#888, #888) bottom / 1px 3px no-repeat; }
.work { height: 11px; border-radius: 3px; }
.tracks .lanes { margin: 0 4px 0 3px; border-top: 3px solid #1eb52b; height: 133px; }
.lanes > .clip { background: #525d92; border-color: #343a55; }
.lanes code { padding-left: 4px; font: 8px/12px "DejaVu Sans Mono", monospace; color: #a2a2a2; border-color: transparent; }
.lanes .open { border-color: transparent; }
.marks { position: absolute; inset: 22px 4px 0 3px; }
.key { position: absolute; top: 95px; left: 0; width: 7px; height: 7px; margin-left: -3px; color: #c4c4c4; }
.k1 { left: 12.500%; }
.k2 { left: 25%; }
.k3 { left: 37.500%; }
.playhead { position: absolute; left: 50%; top: 0; bottom: 0; width: 1px; background: #3e8bd8; }
.playhead::after { content: ""; position: absolute; inset: 34px 0 0; background: #7d8995; }
.playhead .key { z-index: 1; }
.cti { position: absolute; top: 9px; left: -4px; width: 9px; height: 10px; color: var(--blue); }
.beam { position: absolute; left: -2px; width: 5px; height: 8px; border: solid #999; border-width: 1px 0; z-index: 1; }
.b1 { top: 59px; }
.b2 { top: 71px; }
.b3 { top: 83px; }
.b4 { top: 141px; }
.rail { display: flex; flex-direction: column; align-items: center; gap: 3px; padding-top: 43px; background: #1e1e1e; }
.rail .i10 { color: #b0b0b0; }
.rail span { width: 9px; height: 86px; border-radius: 3px; background: #333; }
.tfoot { grid-column: 1 / -1; display: grid; grid-template-columns: 484px 1fr; align-items: center; border-top: 1px solid #141414; background: var(--panel); }
.toggles { display: flex; gap: 4px; padding-left: 4px; }
.toggles svg { width: 9px; height: 9px; }
.zoomer { display: flex; align-items: center; gap: 4px; }
.zoomer svg { width: 11px; height: 6px; }
.zoomer svg.small { width: 8px; height: 4px; }
.zoomer input { appearance: none; width: 40px; height: 7px; margin: 0; background: linear-gradient(#555, #555) center / 100% 1px no-repeat; }
.zoomer input::-webkit-slider-thumb { appearance: none; width: 7px; height: 7px; border: 1px solid #aaa; border-radius: 50%; background: var(--panel); }
```
